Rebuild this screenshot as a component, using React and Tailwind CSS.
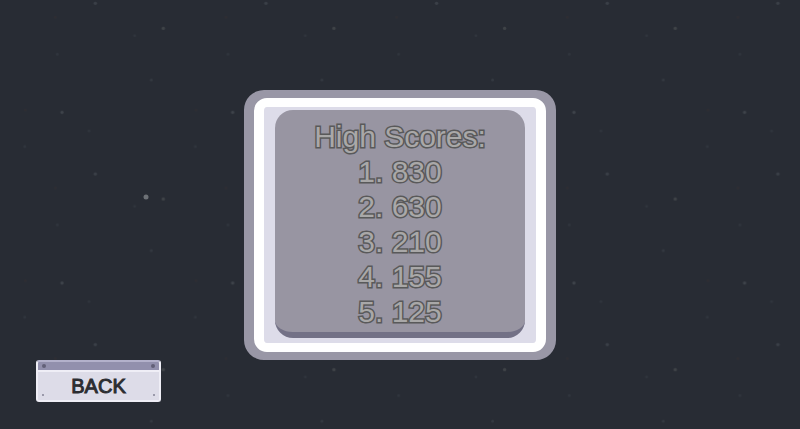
const scores = [830, 630, 210, 155, 125]

// one repeat of the night sky, in tile units
const stars = [
  { x: 286, y: 10, r: 5, fill: '#3a3f47' },
  { x: 490, y: 85, r: 5, fill: '#3f4347' },
  { x: 186, y: 337, r: 5, fill: '#3e434a' },
  { x: 404, y: 107, r: 4, fill: '#30353d' },
  { x: 172, y: 163, r: 4, fill: '#30353d' },
  { x: 454, y: 240, r: 4, fill: '#343941' },
  { x: 267, y: 393, r: 4, fill: '#30353d' },
  { x: 74, y: 440, r: 4, fill: '#30353d' },
  { x: 76, y: 330, r: 4, fill: '#2e2d32' },
  { x: 166, y: 52, r: 4, fill: '#2e2d32' },
]

const Sky = () => (
  <svg className="absolute inset-0 h-full w-full" aria-hidden="true">
    <defs>
      <pattern
        id="stars"
        width="512"
        height="512"
        patternUnits="userSpaceOnUse"
        patternTransform="scale(0.3333)"
      >
        {stars.map(({ x, y, r, fill }) => (
          <circle key={`${x}-${y}`} cx={x} cy={y} r={r} fill={fill} />
        ))}
      </pattern>
    </defs>
    <rect width="100%" height="100%" fill="url(#stars)" />
    <circle cx="146" cy="197" r="2.5" fill="#6d7176" />
  </svg>
)

const BackButton = () => (
  <button
    type="button"
    className="relative flex h-[42px] w-[125px] flex-col overflow-hidden rounded-[3px] border-2 border-[#efeef6] border-t-[#b3b1cb] bg-[#dddce8] text-[20px] leading-[28px] text-[#2c2d31]"
  >
    <span className="flex h-2 w-full items-center justify-between bg-[#9290ad] px-1">
      <span className="size-1 rounded-full bg-[#626078]" />
      <span className="size-1 rounded-full bg-[#626078]" />
    </span>
    <span className="flex w-full flex-1 items-center justify-center border-t-2 border-[#efeef6] [-webkit-text-stroke:1px_#2c2d31]">
      BACK
    </span>
    <span className="absolute bottom-1 left-1 size-[2px] bg-[#9a99aa]" />
    <span className="absolute right-1 bottom-1 size-[2px] bg-[#9a99aa]" />
  </button>
)

const HighScores = () => (
  <section className="rounded-[20px] border-x-10 border-y-8 border-[#9997a6] bg-[#9997a6]">
    <div className="rounded-[13px] border-x-10 border-y-9 border-white bg-[#dddce9] px-[11px] pt-[3px] pb-[5px]">
      <div className="w-[250px] rounded-[18px] border-b-[6px] border-[#737186] bg-[#9895a2] pt-[9px] pb-[3px] text-center text-[30px] leading-[35px] text-[#a9a8a8] [-webkit-text-stroke:3px_#59595a] [paint-order:stroke_fill]">
        <h1>High Scores:</h1>
        <ol>
          {scores.map((score, i) => (
            <li key={score}>
              {i + 1}. {score}
            </li>
          ))}
        </ol>
      </div>
    </div>
  </section>
)

const App = () => (
  <main className="relative min-h-screen bg-[#282c34] font-['Liberation_Sans',Arial,sans-serif]">
    <Sky />
    <div className="relative grid min-h-screen grid-cols-[1fr_auto_1fr]">
      <nav className="self-end pb-[27px] pl-9">
        <BackButton />
      </nav>
      <div className="mt-[21px] self-center">
        <HighScores />
      </div>
    </div>
  </main>
)

export default App
